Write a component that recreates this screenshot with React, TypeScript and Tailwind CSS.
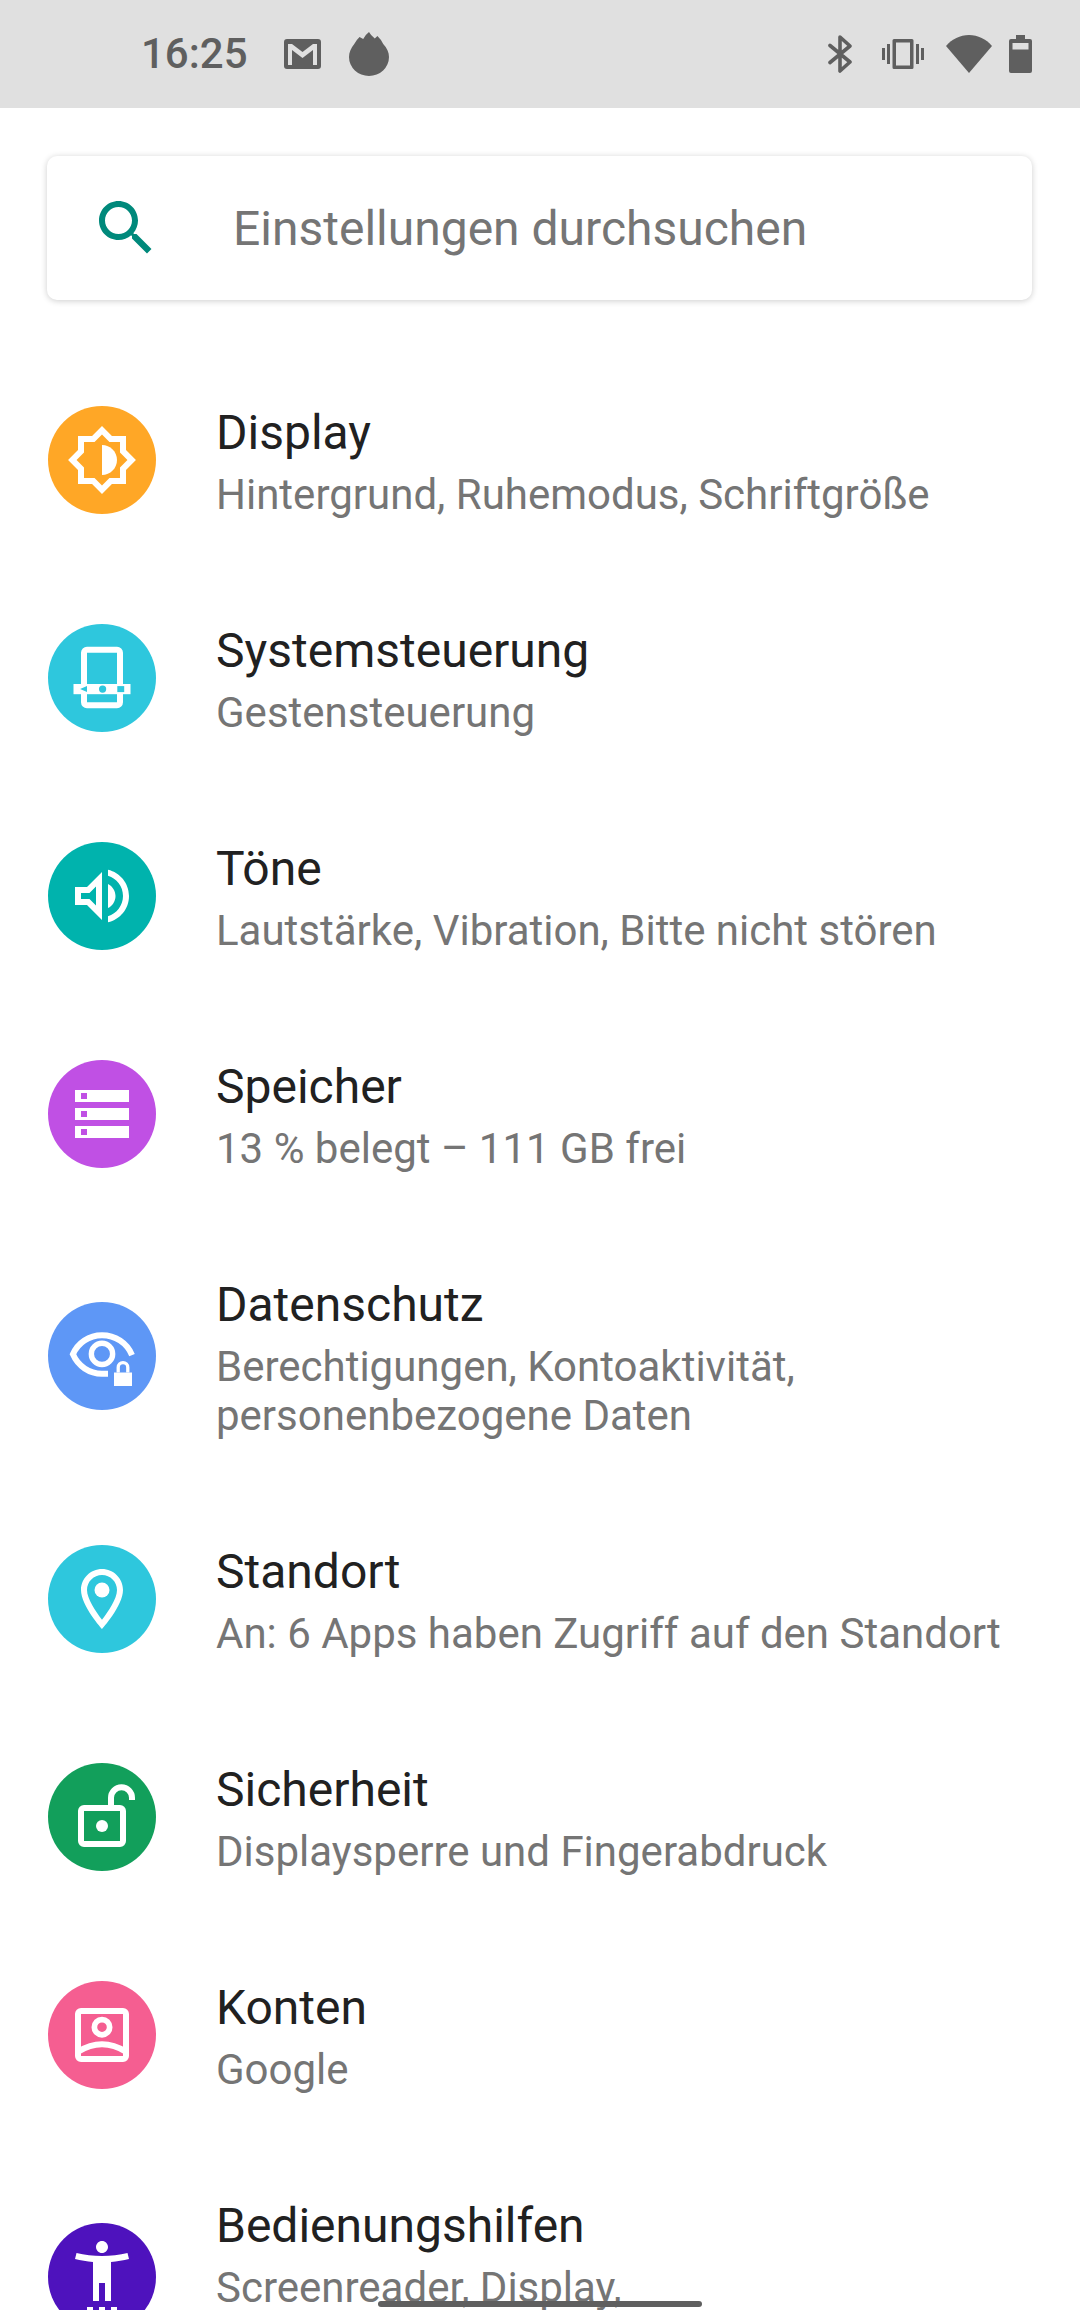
import React from "react";

const font = { fontFamily: "Roboto, sans-serif" };

type Item = { title: string; sub: string[]; color: string; icon: React.ReactNode; height: string };

function Svg({ children, className = "" }: { children: React.ReactNode; className?: string }) {
  return (
    <svg viewBox="0 0 24 24" className={`w-[72px] h-[72px] ${className}`} fill="#fff">
      {children}
    </svg>
  );
}

const items: Item[] = [
  {
    title: "Display",
    sub: ["Hintergrund, Ruhemodus, Schriftgröße"],
    color: "bg-[#ffa726]",
    height: "h-[218px]",
    icon: (
      <Svg>
        <path fillRule="evenodd" d="M20 8.69V4h-4.69L12 .69 8.69 4H4v4.69L.69 12 4 15.31V20h4.69L12 23.31 15.31 20H20v-4.69L23.31 12 20 8.69zm-2 5.79V18h-3.52L12 20.48 9.52 18H6v-3.52L3.52 12 6 9.52V6h3.52L12 3.52 14.48 6H18v3.52L20.48 12 18 14.48z" />
        <path d="M12 7v10c2.76 0 5-2.24 5-5s-2.24-5-5-5z" />
      </Svg>
    ),
  },
  {
    title: "Systemsteuerung",
    sub: ["Gestensteuerung"],
    color: "bg-[#2ec7dd]",
    height: "h-[218px]",
    icon: (
      <Svg>
        <rect x="6" y="2.6" width="12" height="18.5" rx="1" fill="none" stroke="#fff" strokeWidth="2" />
        <rect x="2.5" y="14" width="19" height="3.4" />
        <path d="M4.7 15.7 7 14.7v2z" fill="#2ec7dd" />
        <circle cx="12.2" cy="15.7" r="1.2" fill="#2ec7dd" />
        <rect x="17.1" y="14.7" width="2.3" height="2" fill="#2ec7dd" />
      </Svg>
    ),
  },
  {
    title: "Töne",
    sub: ["Lautstärke, Vibration, Bitte nicht stören"],
    color: "bg-[#00b3ad]",
    height: "h-[218px]",
    icon: (
      <Svg>
        <path fillRule="evenodd" d="M3 9v6h4l5 5V4L7 9H3zm7-.17v6.34L7.83 13H5v-2h2.83L10 8.83z" />
        <path d="M16.5 12c0-1.77-1.02-3.29-2.5-4.03v8.05c1.48-.73 2.5-2.25 2.5-4.02zM14 3.23v2.06c2.89.86 5 3.54 5 6.71s-2.11 5.85-5 6.71v2.06c4.01-.91 7-4.49 7-8.77 0-4.28-2.99-7.86-7-8.77z" />
      </Svg>
    ),
  },
  {
    title: "Speicher",
    sub: ["13 % belegt – 111 GB frei"],
    color: "bg-[#c050e4]",
    height: "h-[218px]",
    icon: (
      <Svg>
        <path fillRule="evenodd" d="M3 4h18v4H3zM5 5v2h2V5zM3 10h18v4H3zM5 11v2h2v-2zM3 16h18v4H3zM5 17v2h2v-2z" />
      </Svg>
    ),
  },
  {
    title: "Datenschutz",
    sub: ["Berechtigungen, Kontoaktivität,", "personenbezogene Daten"],
    color: "bg-[#5e97f6]",
    height: "h-[266px] mb-[1px]",
    icon: (
      <Svg>
        <path d="M22 11.7C20.3 7.6 16.4 5.1 12 5.1S4 7.6 2.3 11.4C4 15.4 7.8 17.9 12 17.9H14" fill="none" stroke="#fff" strokeWidth="2" />
        <circle cx="12" cy="11.3" r="3.55" fill="none" stroke="#fff" strokeWidth="1.8" />
        <path d="M16 17.5h6V22h-6z" />
        <path d="M17.4 17.5v-1.7a1.6 1.6 0 0 1 3.2 0v1.7" fill="none" stroke="#fff" strokeWidth="1.1" />
      </Svg>
    ),
  },
  {
    title: "Standort",
    sub: ["An: 6 Apps haben Zugriff auf den Standort"],
    color: "bg-[#2ec7dd]",
    height: "h-[218px]",
    icon: (
      <Svg>
        <path fillRule="evenodd" d="M12 2C8.13 2 5 5.13 5 9c0 5.25 7 13 7 13s7-7.75 7-13c0-3.87-3.13-7-7-7zM7 9c0-2.76 2.24-5 5-5s5 2.24 5 5c0 2.88-2.88 7.19-5 9.88C9.92 16.21 7 11.85 7 9z" />
        <circle cx="12" cy="9" r="2.5" />
      </Svg>
    ),
  },
  {
    title: "Sicherheit",
    sub: ["Displaysperre und Fingerabdruck"],
    color: "bg-[#129f5b]",
    height: "h-[218px]",
    icon: (
      <Svg>
        <rect x="5" y="9" width="14" height="12" rx="1" fill="none" stroke="#fff" strokeWidth="2" />
        <circle cx="12" cy="15" r="2" />
        <path d="M15 8.5V5.6a3.5 3.5 0 0 1 7 0v.7" fill="none" stroke="#fff" strokeWidth="2" />
      </Svg>
    ),
  },
  {
    title: "Konten",
    sub: ["Google"],
    color: "bg-[#f55e91]",
    height: "h-[218px]",
    icon: (
      <Svg>
        <rect x="4" y="4" width="16" height="16" rx="1" fill="none" stroke="#fff" strokeWidth="2" />
        <circle cx="12" cy="9.4" r="2.55" fill="none" stroke="#fff" strokeWidth="1.9" />
        <path d="M4 17.6Q12 12.6 20 17.6" fill="none" stroke="#fff" strokeWidth="2" />
      </Svg>
    ),
  },
  {
    title: "Bedienungshilfen",
    sub: ["Screenreader, Display,", "\u00a0"],
    color: "bg-[#4e12bd]",
    height: "h-[266px]",
    icon: (
      <Svg className="-mt-3 overflow-visible">
        <path d="M20.5 6c-2.61.7-5.67 1-8.5 1s-5.89-.3-8.5-1L3 8c1.86.5 4 .83 6 1v13h2v-6h2v6h2V9c2-.17 4.14-.5 6-1l-.5-2zM12 6c1.1 0 2-.9 2-2s-.9-2-2-2-2 .9-2 2 .9 2 2 2z" />
        <path d="M7 24h2v2H7zM11 24h2v2h-2zM15 24h2v2h-2z" />
      </Svg>
    ),
  },
];

function Row({ item }: { item: Item }) {
  return (
    <div className={`flex items-center pl-[48px] shrink-0 ${item.height}`}>
      <div className={`w-[108px] h-[108px] rounded-full flex items-center justify-center shrink-0 ${item.color}`}>
        {item.icon}
      </div>
      <div className="ml-[60px] pb-[5px] flex flex-col">
        <div className="text-[48px] leading-[74px] text-[#212121]">{item.title}</div>
        {item.sub.map((s, i) => (
          <div key={i} className="text-[42px] leading-[49px] text-[#757575] whitespace-nowrap">
            {s}
          </div>
        ))}
      </div>
    </div>
  );
}

export default function App() {
  return (
    <div className="relative w-[1080px] h-[2310px] overflow-hidden bg-white flex flex-col" style={font}>
      <div className="h-[108px] bg-[#e0e0e0] flex items-center justify-between pl-[141px] pr-[48px] shrink-0">
        <div className="flex items-center">
          <span className="text-[42px] leading-none text-[#5f5f5f] font-medium">16:25</span>
          <svg viewBox="0 0 37 30" className="ml-[36px] w-[37px] h-[30px]" fill="#5f5f5f">
            <path fillRule="evenodd" d="M3 0h31a3 3 0 0 1 3 3v24a3 3 0 0 1-3 3H3a3 3 0 0 1-3-3V3a3 3 0 0 1 3-3zm1 5v21h4V11l10.5 8L29 11v15h4V5h-4L18.5 13 8 5z" />
          </svg>
          <svg viewBox="0 0 38 44" preserveAspectRatio="none" className="ml-[28px] w-[40px] h-[44px]" fill="#5f5f5f">
            <path d="M19 0 21 3 24.500 6.500 27 4Q31 8 32.500 12C36 16 38 20 38 25A19 19 0 0 1 0 25C0 20 2 16 5 12Q7 8 10 5L13.500 7 16 3Z" />
          </svg>
        </div>
        <div className="flex items-center">
          <svg viewBox="0 0 24 38" className="w-[24px] h-[38px]" fill="none" stroke="#5f5f5f" strokeWidth="3.6" strokeLinecap="round" strokeLinejoin="round">
            <path d="M2 10.500 22 27 12 36V2l10 9L2 27.500" />
          </svg>
          <svg viewBox="0 0 42 30" className="ml-[30px] w-[42px] h-[30px]" fill="#5f5f5f">
            <path fillRule="evenodd" d="M12 0h18a1.500 1.500 0 0 1 1.500 1.500v27A1.500 1.500 0 0 1 30 30H12a1.500 1.500 0 0 1-1.500-1.500v-27A1.500 1.500 0 0 1 12 0zm2 3.500v23h14v-23z" />
            <rect x="0" y="9" width="3" height="12" />
            <rect x="5" y="5" width="3" height="20" />
            <rect x="34" y="5" width="3" height="20" />
            <rect x="39" y="9" width="3" height="12" />
          </svg>
          <svg viewBox="0 0 46 38" className="ml-[22px] w-[46px] h-[38px]" fill="#5f5f5f">
            <path d="M0 11C6 4 14 0 23 0s17 4 23 11L23 38z" />
          </svg>
          <svg viewBox="0 0 23 38" className="ml-[17px] w-[23px] h-[38px]" fill="#5f5f5f">
            <path fillRule="evenodd" d="M7 0h9v4h5a2 2 0 0 1 2 2v30a2 2 0 0 1-2 2H2a2 2 0 0 1-2-2V6a2 2 0 0 1 2-2h5zM3.500 8v6.500h16V8z" />
          </svg>
        </div>
      </div>

      <div className="ml-[47px] w-[985px] mt-[48px] h-[144px] shrink-0 rounded-[10px] bg-white shadow-[0_1px_6px_rgba(0,0,0,0.2)] flex items-center">
        <svg viewBox="0 0 24 24" className="ml-[43px] w-[72px] h-[72px]" fill="#00897b">
          <path d="M15.500 14h-.79l-.28-.27C15.410 12.590 16 11.110 16 9.500 16 5.910 13.090 3 9.500 3S3 5.910 3 9.500 5.910 16 9.500 16c1.610 0 3.090-.59 4.230-1.570l.27.28v.79l5 4.990L20.490 19l-4.990-5zm-6 0C7.010 14 5 11.990 5 9.500S7.010 5 9.500 5 14 7.010 14 9.500 11.990 14 9.500 14z" />
        </svg>
        <span className="ml-[71px] pt-[2px] text-[48px] leading-[56px] text-[#757575]">Einstellungen durchsuchen</span>
      </div>

      <div className="mt-[51px] flex flex-col">
        {items.map((it) => (
          <Row key={it.title} item={it} />
        ))}
      </div>

      <div className="absolute left-[378px] top-[2301px] w-[324px] h-[6px] rounded-full bg-[#5f5f5f]" />
    </div>
  );
}
